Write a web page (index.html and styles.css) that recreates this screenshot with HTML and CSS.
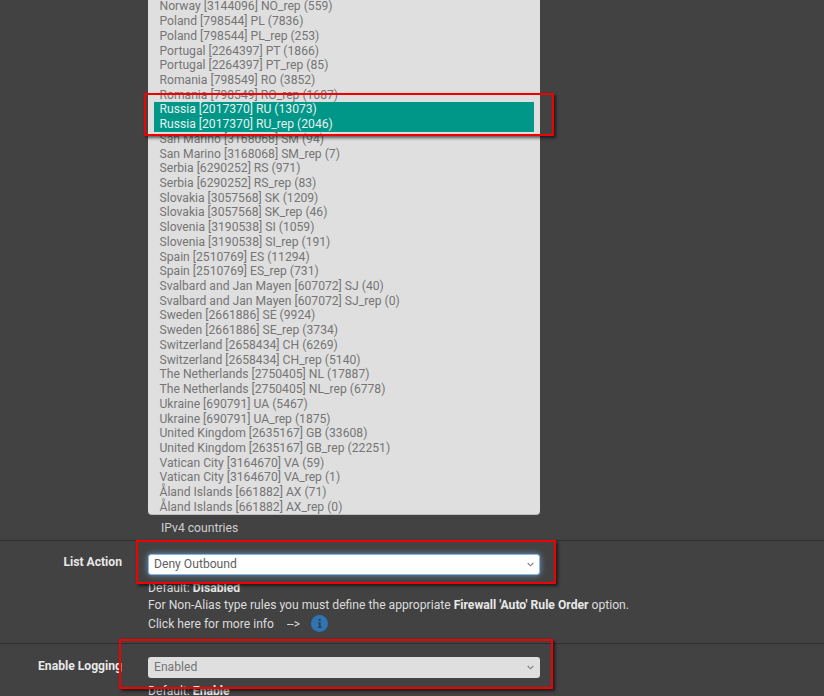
FILE: index.html
```html
<!DOCTYPE html>
<html lang="en">
<head>
<meta charset="utf-8">
<title>IP Block List</title>
<link rel="stylesheet" href="styles.css">
</head>
<body>
<main class="page">
  <section class="row row-list">
    <div class="field">
      <div class="listbox" role="listbox" aria-multiselectable="true">
        <div class="option">Norway [3144096] NO_rep (559)</div>
        <div class="option">Poland [798544] PL (7836)</div>
        <div class="option">Poland [798544] PL_rep (253)</div>
        <div class="option">Portugal [2264397] PT (1866)</div>
        <div class="option">Portugal [2264397] PT_rep (85)</div>
        <div class="option">Romania [798549] RO (3852)</div>
        <div class="option">Romania [798549] RO_rep (1687)</div>
        <div class="option selected">Russia [2017370] RU (13073)</div>
        <div class="option selected">Russia [2017370] RU_rep (2046)</div>
        <div class="option">San Marino [3168068] SM (94)</div>
        <div class="option">San Marino [3168068] SM_rep (7)</div>
        <div class="option">Serbia [6290252] RS (971)</div>
        <div class="option">Serbia [6290252] RS_rep (83)</div>
        <div class="option">Slovakia [3057568] SK (1209)</div>
        <div class="option">Slovakia [3057568] SK_rep (46)</div>
        <div class="option">Slovenia [3190538] SI (1059)</div>
        <div class="option">Slovenia [3190538] SI_rep (191)</div>
        <div class="option">Spain [2510769] ES (11294)</div>
        <div class="option">Spain [2510769] ES_rep (731)</div>
        <div class="option">Svalbard and Jan Mayen [607072] SJ (40)</div>
        <div class="option">Svalbard and Jan Mayen [607072] SJ_rep (0)</div>
        <div class="option">Sweden [2661886] SE (9924)</div>
        <div class="option">Sweden [2661886] SE_rep (3734)</div>
        <div class="option">Switzerland [2658434] CH (6269)</div>
        <div class="option">Switzerland [2658434] CH_rep (5140)</div>
        <div class="option">The Netherlands [2750405] NL (17887)</div>
        <div class="option">The Netherlands [2750405] NL_rep (6778)</div>
        <div class="option">Ukraine [690791] UA (5467)</div>
        <div class="option">Ukraine [690791] UA_rep (1875)</div>
        <div class="option">United Kingdom [2635167] GB (33608)</div>
        <div class="option">United Kingdom [2635167] GB_rep (22251)</div>
        <div class="option">Vatican City [3164670] VA (59)</div>
        <div class="option">Vatican City [3164670] VA_rep (1)</div>
        <div class="option">Åland Islands [661882] AX (71)</div>
        <div class="option">Åland Islands [661882] AX_rep (0)</div>
      </div>
      <div class="list-caption">IPv4 countries</div>
    </div>
  </section>

  <section class="row row-action">
    <div class="label">List Action</div>
    <div class="field">
      <div class="select focused">
        <span>Deny Outbound</span>
        <svg class="chevron" viewBox="0 0 8 5" aria-hidden="true"><path d="M.8.8 4 4 7.2.8"/></svg>
      </div>
      <div class="help help-first">Default: <b>Disabled</b></div>
      <div class="help help-second">For Non-Alias type rules you must define the appropriate <b>Firewall 'Auto' Rule Order</b> option.</div>
      <div class="help help-info">
        <span>Click here for more info</span>
        <span class="arrow">--&gt;</span>
        <svg class="info" viewBox="0 0 17 17" aria-hidden="true">
          <circle cx="8.5" cy="8.5" r="8.5"/>
          <circle class="info-mark" cx="8.7" cy="4.9" r="1.2"/>
          <path class="info-mark" d="M6.8 7.2h2.9v4.6h1v1.1H6.8v-1.1h1v-3.5h-1z"/>
        </svg>
      </div>
    </div>
  </section>

  <section class="row row-logging">
    <div class="label">Enable Logging</div>
    <div class="field">
      <div class="select">
        <span>Enabled</span>
        <svg class="chevron" viewBox="0 0 8 5" aria-hidden="true"><path d="M.8.8 4 4 7.2.8"/></svg>
      </div>
      <div class="help help-first">Default: <b>Enable</b></div>
    </div>
  </section>

  <div class="mark mark-russia"></div>
  <div class="mark mark-action"></div>
  <div class="mark mark-logging"></div>
</main>
</body>
</html>
```

FILE: styles.css
```css
* {
  box-sizing: border-box;
}

html,
body {
  margin: 0;
  height: 100%;
  overflow: hidden;
  background: #424242;
}

.page {
  position: relative;
  width: 824px;
  height: 696px;
  overflow: hidden;
  font-family: Roboto, "Liberation Sans", sans-serif;
  font-size: 12.15px;
  color: #dcdcdc;
}

.row {
  display: grid;
  grid-template-columns: 148px 392px;
  border-bottom: 1px solid #2f2f2f;
}

.row-logging {
  border-bottom: 0;
}

.field {
  grid-column: 2;
  min-width: 0;
}

.label {
  grid-column: 1;
  padding-right: 26px;
  font-weight: 700;
  text-align: right;
  color: #e8e8e8;
}

.listbox {
  height: 517px;
  margin-top: -2px;
  padding: 1.4px 6px 0;
  background: #dfdfdf;
  border-bottom: 1px solid #bdbdbd;
  border-radius: 0 0 4px 4px;
}

.option {
  height: 14.73px;
  padding-left: 5.5px;
  line-height: 14.73px;
  white-space: nowrap;
  color: #757575;
}

.option.selected {
  background: #009688;
  color: #e6f2f0;
}

.list-caption {
  height: 25px;
  padding: 6px 0 0 13px;
  line-height: 15px;
  color: #cfcfcf;
}

.row-action {
  height: 103px;
}

.row-action .label {
  padding-top: 14px;
  line-height: 15px;
}

.row-logging .label {
  padding-top: 15px;
  line-height: 15px;
}

.row-action .field {
  padding-top: 12.5px;
}

.row-logging .field {
  padding-top: 12.5px;
}

.select {
  display: flex;
  align-items: center;
  justify-content: space-between;
  height: 21px;
  padding: 0 6px;
  border-radius: 3px;
  background: #dfdfdf;
  color: #757575;
  line-height: 15px;
}

.select.focused {
  background: #fff;
  color: #616161;
  border: 1px solid #8ab8e6;
  padding: 0 5px;
  box-shadow: 0 0 6px rgba(120, 180, 240, .75);
}

.chevron {
  width: 7px;
  height: 5px;
  fill: none;
  stroke: #808080;
  stroke-width: 1.3;
}

.help {
  line-height: 15px;
  white-space: nowrap;
}

.help-first {
  margin-top: 6.5px;
}

.help-second {
  margin-top: 2px;
}

.help-info {
  display: flex;
  align-items: center;
  height: 17px;
  margin-top: 3px;
}

.arrow {
  margin-left: 13px;
}

.info {
  width: 17px;
  height: 17px;
  margin: -3px 0 0 11px;
  fill: #2f74b5;
}

.info .info-mark {
  fill: #33404d;
}

.help b {
  font-weight: 700;
  color: #e8e8e8;
}

.mark {
  position: absolute;
  border: 2px solid #f00000;
  box-shadow: 2px 2px 3px rgba(0, 0, 0, .6);
}

.mark-russia {
  left: 144px;
  top: 93px;
  width: 410px;
  height: 43px;
}

.mark-action {
  left: 136px;
  top: 540px;
  width: 420px;
  height: 44px;
}

.mark-logging {
  left: 119px;
  top: 639px;
  width: 434px;
  height: 50px;
}
```
